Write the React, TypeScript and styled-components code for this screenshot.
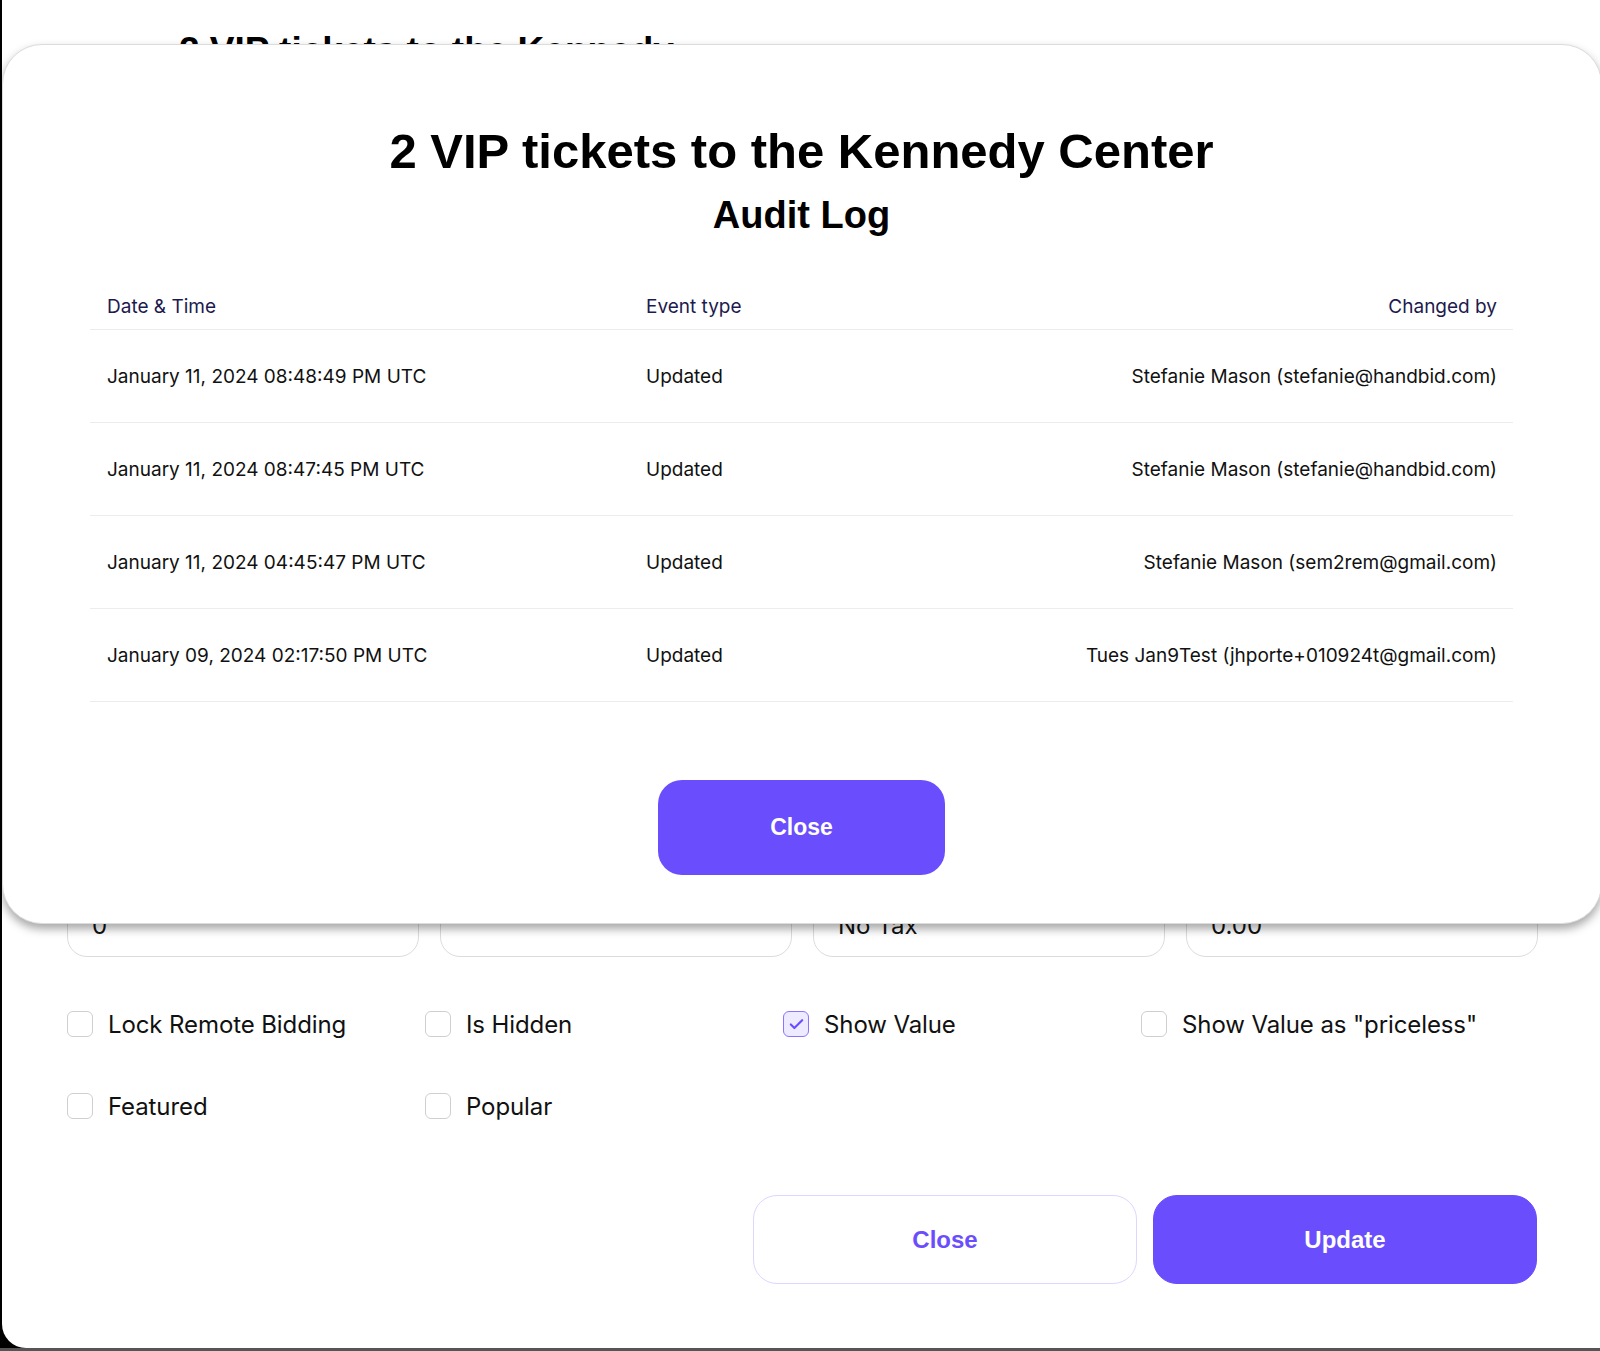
import React from 'react';
import styled, { createGlobalStyle } from 'styled-components';
import { Check } from 'lucide-react';

const PURPLE = '#6a4dfd';

const GlobalStyle = createGlobalStyle`
  html, body {
    margin: 0;
    padding: 0;
    background: #000;
    overflow: hidden;
  }
  * {
    box-sizing: border-box;
  }
  #root {
    position: relative;
    width: 1600px;
    height: 1351px;
    background: linear-gradient(to bottom, #000 0, #000 1348px, #555 1348px);
  }
`;

/* ---------- page under the dialog (edit item form) ---------- */

const Page = styled.div`
  margin-left: 2px;
  height: 1348px;
  background: #fff;
  border-bottom-left-radius: 24px;
  padding: 30px 63px 0 65px;
  font-family: Inter, 'Liberation Sans', sans-serif;
  color: #111;
`;

const PageTitle = styled.h1`
  margin: 0 0 0 112px;
  max-width: 520px;
  font-family: 'Liberation Sans', Arial, sans-serif;
  font-size: 37px;
  line-height: 1.15;
  font-weight: 700;
  color: #000;
`;

const InputRow = styled.div`
  display: grid;
  grid-template-columns: repeat(4, 352px);
  gap: 21px;
  margin-top: 772px;
`;

const Field = styled.div`
  height: 70px;
  border: 1px solid #dcdcdc;
  border-radius: 20px;
  padding: 0 24px;
  display: flex;
  align-items: center;
  padding-top: 6px;
  font-size: 24px;
  color: #111;
`;

const CheckGrid = styled.div`
  display: grid;
  grid-template-columns: repeat(4, 358px);
  row-gap: 42px;
  margin-top: 47px;
`;

const CheckItem = styled.label`
  display: flex;
  align-items: center;
  gap: 15px;
  height: 40px;
  font-size: 24px;
  letter-spacing: -0.1px;
  color: #111;
`;

const Box = styled.span<{ $checked?: boolean }>`
  width: 26px;
  height: 26px;
  border-radius: 6px;
  border: 1.5px solid ${p => (p.$checked ? '#8b74ff' : '#cfcfcf')};
  background: ${p => (p.$checked ? '#eeeaff' : '#fff')};
  display: flex;
  align-items: center;
  justify-content: center;
  flex-shrink: 0;
`;

const ButtonRow = styled.div`
  display: flex;
  justify-content: flex-end;
  gap: 16px;
  margin-top: 69px;
`;

const ActionButton = styled.button<{ $primary?: boolean }>`
  width: 384px;
  height: 89px;
  border-radius: 24px;
  border: 1.5px solid ${p => (p.$primary ? PURPLE : '#ddd6ff')};
  background: ${p => (p.$primary ? PURPLE : '#fff')};
  color: ${p => (p.$primary ? '#fff' : PURPLE)};
  font-family: 'Liberation Sans', Arial, sans-serif;
  font-weight: 700;
  font-size: 24px;
  cursor: pointer;
`;

/* ---------- audit log dialog ---------- */

const Dialog = styled.div`
  position: absolute;
  top: 44px;
  left: 2px;
  width: 1600px;
  background: #fff;
  border: 1px solid #dcdcdc;
  border-radius: 40px;
  box-shadow: 0 5px 10px rgba(0, 0, 0, 0.35);
  padding: 78px 88px 48px 87px;
  display: flex;
  flex-direction: column;
  align-items: center;
  font-family: Inter, 'Liberation Sans', sans-serif;
`;

const DialogTitle = styled.h2`
  margin: 0;
  font-family: 'Liberation Sans', Arial, sans-serif;
  font-size: 49px;
  line-height: 1.15;
  font-weight: 700;
  color: #000;
`;

const DialogSubtitle = styled.h3`
  margin: 15px 0 0;
  font-family: 'Liberation Sans', Arial, sans-serif;
  font-size: 38px;
  line-height: 1.15;
  font-weight: 700;
  color: #000;
`;

const LogTable = styled.div`
  align-self: stretch;
  margin-top: 46px;
`;

const LogRow = styled.div<{ $head?: boolean }>`
  display: grid;
  grid-template-columns: 539px 1fr auto;
  align-items: center;
  height: ${p => (p.$head ? '46px' : '93px')};
  padding: 0 16px 0 17px;
  border-bottom: 1px solid #ececec;
  font-size: 19px;
  color: ${p => (p.$head ? '#1d1a4e' : '#111')};

  & > :last-child {
    text-align: right;
  }
`;

const Cell = styled.span``;

const CloseButton = styled.button`
  margin-top: 78px;
  width: 287px;
  height: 95px;
  border: none;
  border-radius: 24px;
  background: ${PURPLE};
  color: #fff;
  font-family: 'Liberation Sans', Arial, sans-serif;
  font-weight: 700;
  font-size: 23px;
  cursor: pointer;
`;

const logEntries = [
  { date: 'January 11, 2024 08:48:49 PM UTC', event: 'Updated', by: 'Stefanie Mason (stefanie@handbid.com)' },
  { date: 'January 11, 2024 08:47:45 PM UTC', event: 'Updated', by: 'Stefanie Mason (stefanie@handbid.com)' },
  { date: 'January 11, 2024 04:45:47 PM UTC', event: 'Updated', by: 'Stefanie Mason (sem2rem@gmail.com)' },
  { date: 'January 09, 2024 02:17:50 PM UTC', event: 'Updated', by: 'Tues Jan9Test (jhporte+010924t@gmail.com)' },
];

const flags = [
  { label: 'Lock Remote Bidding', checked: false },
  { label: 'Is Hidden', checked: false },
  { label: 'Show Value', checked: true },
  { label: 'Show Value as "priceless"', checked: false },
  { label: 'Featured', checked: false },
  { label: 'Popular', checked: false },
];

const App: React.FC = () => {
  return (
    <>
      <GlobalStyle />
      <Page>
        <PageTitle>2 VIP tickets to the Kennedy Center</PageTitle>

        <InputRow>
          <Field>0</Field>
          <Field></Field>
          <Field>No Tax</Field>
          <Field>0.00</Field>
        </InputRow>

        <CheckGrid>
          {flags.map(f => (
            <CheckItem key={f.label}>
              <Box $checked={f.checked}>
                {f.checked && <Check size={17} strokeWidth={3} color={PURPLE} />}
              </Box>
              {f.label}
            </CheckItem>
          ))}
        </CheckGrid>

        <ButtonRow>
          <ActionButton>Close</ActionButton>
          <ActionButton $primary>Update</ActionButton>
        </ButtonRow>
      </Page>

      <Dialog>
        <DialogTitle>2 VIP tickets to the Kennedy Center</DialogTitle>
        <DialogSubtitle>Audit Log</DialogSubtitle>

        <LogTable>
          <LogRow $head>
            <Cell>Date &amp; Time</Cell>
            <Cell>Event type</Cell>
            <Cell>Changed by</Cell>
          </LogRow>
          {logEntries.map(entry => (
            <LogRow key={entry.date}>
              <Cell>{entry.date}</Cell>
              <Cell>{entry.event}</Cell>
              <Cell>{entry.by}</Cell>
            </LogRow>
          ))}
        </LogTable>

        <CloseButton>Close</CloseButton>
      </Dialog>
    </>
  );
};

export default App;
